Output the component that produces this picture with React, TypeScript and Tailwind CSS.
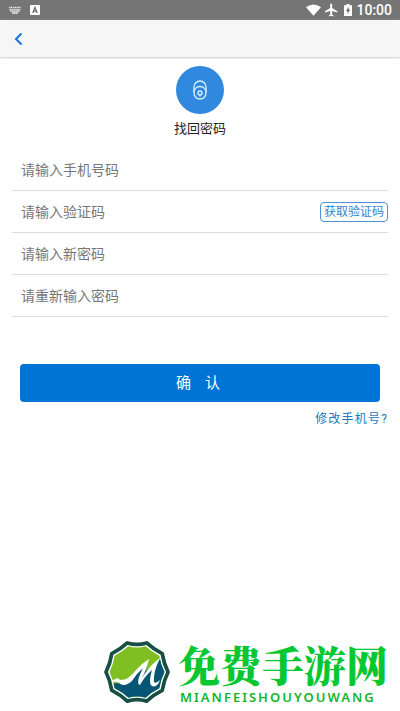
import React from "react";

const font = "font-['Roboto','Noto_Sans_CJK_SC',sans-serif]";

function StatusBar() {
  return (
    <div className="flex h-5 items-center justify-between bg-[#757575] px-2 text-white">
      <div className="flex items-center gap-2">
        <svg width="14" height="8" viewBox="0 0 14 8" aria-hidden="true">
          <g stroke="#e4e4e4" strokeWidth="1.3">
            <path d="M1 1.5h12M1.5 3.7h11" strokeDasharray="1.5 .5" />
            <path d="M2 5.2h10M4 7h6" />
          </g>
        </svg>
        <svg width="10" height="10" viewBox="0 0 10 10" aria-hidden="true">
          <rect width="10" height="10" rx="1" fill="#fff" />
          <path d="M2.8 8L5 2.3 7.2 8M3.6 6.2h2.8" fill="none" stroke="#666" strokeWidth="1.2" />
        </svg>
      </div>
      <div className="flex items-center">
        <svg width="15" height="12" viewBox="0 0 16 12" aria-hidden="true">
          <path d="M0 3Q8-2.8 16 3L8 12Z" fill="#fff" />
        </svg>
        <svg className="ml-1" width="13" height="14" viewBox="2 2 20 20" aria-hidden="true">
          <path d="M21 16v-2l-8-5V3.5a1.5 1.5 0 0 0-3 0V9l-8 5v2l8-2.5V19l-2 1.5V22l3.5-1 3.5 1v-1.5L13 19v-5.5z" fill="#fff" />
        </svg>
        <svg className="ml-1.5" width="8" height="12" viewBox="0 0 8 12" aria-hidden="true">
          <path d="M2.5 0h3v1.2H8V12H0V1.2h2.5z" fill="#fff" />
          <path d="M4.7 2.8L2 7h1.6v3L6.2 5.8H4.7z" fill="#666" />
        </svg>
        <span className="ml-1 text-sm leading-5 font-medium">10:00</span>
      </div>
    </div>
  );
}

function Field({ id, label, type, children }: { id: string; label: string; type: string; children?: React.ReactNode }) {
  return (
    <div className="flex h-[42px] items-center border-b border-[#dedede]">
      <input
        id={id}
        type={type}
        aria-label={label}
        placeholder={label}
        className="min-w-0 flex-1 bg-transparent pl-[9px] text-sm text-[#333] outline-none placeholder:text-[#777]"
      />
      {children}
    </div>
  );
}

const badgeOutline =
  "M23 2Q33 5 43 2Q50 8.500 59 13Q60.500 23 65 32Q60.500 41 59 51Q50 55.500 43 62Q33 59 23 62Q16 55.500 7 51Q5.500 41 1 32Q5.500 23 7 13Q16 8.500 23 2Z";

function BrandMark() {
  return (
    <svg width="66" height="64" viewBox="0 0 66 64" aria-hidden="true">
      <defs>
        <clipPath id="badge">
          <path d={badgeOutline} transform="translate(4.600 4.500) scale(.86)" />
        </clipPath>
      </defs>
      <path d={badgeOutline} fill="#fff" stroke="#174f45" strokeWidth="3.800" strokeLinejoin="round" transform="translate(1 1) scale(.97)" />
      <g clipPath="url(#badge)">
        <path d="M0 0H66V64H0Z" fill="#80bf22" />
        <path d="M4 43Q24 46 34 31L43 22L42 31L55 20L66 18V64H4Z" fill="#075574" />
      </g>
      <path
        d="M8 41Q14 36 16 40Q25 40 32 30Q37 24 45 19Q42 31 38 38Q46 25 56 18Q49 32 50 42Q52 44 56 40Q53 48 48 46Q44 44 48 30Q41 36 36 45Q31 44 39 28Q32 34 28 41Q20 48 15 43Q12 41 8 42Z"
        fill="#fff"
      />
    </svg>
  );
}

export default function App() {
  return (
    <div className={`flex min-h-screen flex-col bg-white text-[#222] ${font}`}>
      <StatusBar />
      <header className="flex h-[37px] items-center bg-[#f6f6f6] px-3 shadow-[0_1px_2px_#ccc]">
        <button type="button" aria-label="返回" className="flex h-8 w-6 items-center">
          <svg width="12" height="14" viewBox="0 0 12 14" fill="none" aria-hidden="true">
            <path d="M9.500 1.500L4 7l5.500 5.500" stroke="#1b75dc" strokeWidth="2" />
          </svg>
        </button>
      </header>

      <main className="px-3">
        <div className="flex flex-col items-center pt-[9px]">
          <div className="flex size-12 items-center justify-center rounded-full bg-[#3188df]">
            <svg width="16" height="20" viewBox="0 0 16 20" fill="none" stroke="#d9f3ff" strokeWidth="1.3" aria-hidden="true">
              <rect x="2" y="1" width="12" height="18" rx="6" />
              <path d="M2 12a6 5.500 0 0 1 12 0" />
              <circle cx="8" cy="13" r="2" />
              <path d="M8 15v1.500" />
            </svg>
          </div>
          <h1 className="mt-1 text-[13px] leading-[22px]">找回密码</h1>
        </div>

        <form className="mt-[9px]" onSubmit={(e) => e.preventDefault()}>
          <Field id="phone" type="tel" label="请输入手机号码" />
          <Field id="code" type="text" label="请输入验证码">
            <button type="button" className="h-5 rounded border border-[#4b91d4] px-[3px] text-xs leading-4 text-[#3583cf]">
              获取验证码
            </button>
          </Field>
          <Field id="password" type="password" label="请输入新密码" />
          <Field id="confirm" type="password" label="请重新输入密码" />
          <div className="mt-[47px] px-2">
            <button type="submit" className="flex h-[38px] w-full items-center justify-center gap-3.5 rounded bg-[#0074d6] pr-1 text-[15px] text-white">
              <span>确</span>
              <span>认</span>
            </button>
          </div>
          <div className="mt-[9px] flex justify-end">
            <a href="#phone" className="text-xs leading-4 tracking-widest text-[#2279bb]">修改手机号?</a>
          </div>
        </form>
      </main>

      <footer className="mt-auto flex items-center justify-end gap-2 pr-3 pb-1.5 text-[#07c832]">
        <BrandMark />
        <div className="flex flex-col">
          <span className="font-['Noto_Serif_CJK_SC','Noto_Sans_CJK_SC',serif] text-[42px] leading-[50px] font-black">免费手游网</span>
          <span className="pl-0.5 font-['Noto_Sans',sans-serif] text-[13px] leading-4 font-semibold tracking-[2px] text-[#13b52c]">MIANFEISHOUYOUWANG</span>
        </div>
      </footer>
    </div>
  );
}
